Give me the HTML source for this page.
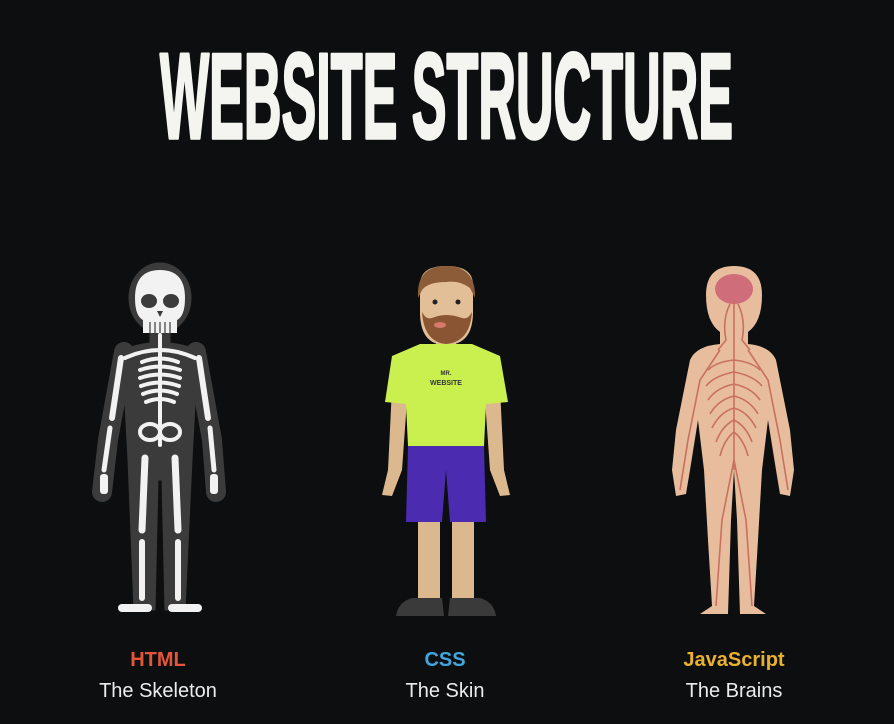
<!DOCTYPE html>
<html><head><meta charset="utf-8"><style>
html,body{margin:0;padding:0;background:#0c0e0f;width:894px;height:724px;overflow:hidden}
svg{display:block}
</style></head><body>
<svg width="894" height="724" viewBox="0 0 894 724" xmlns="http://www.w3.org/2000/svg">
<rect width="894" height="724" fill="#0c0e0f"/>
<text x="160" y="138" textLength="573" lengthAdjust="spacingAndGlyphs" font-family="Liberation Sans, sans-serif" font-weight="bold" font-size="122" fill="#f4f4f0" stroke="#f4f4f0" stroke-width="3.5" stroke-linejoin="round">WEBSITE STRUCTURE</text>

<!-- Skeleton -->
<g>
<g fill="#3b3b3b" stroke="#3b3b3b" stroke-linecap="round" stroke-linejoin="round">
<ellipse cx="160" cy="298" rx="31" ry="35"/>
<rect x="150" y="325" width="20" height="25"/>
<path d="M122 350 Q160 335 198 350 L192 460 L185 610 L165 610 L162 480 L158 480 L155 610 L134 610 L128 460 Z"/>
<path d="M124 352 L108 440 L102 492" stroke-width="20" fill="none"/>
<path d="M196 352 L212 440 L216 492" stroke-width="20" fill="none"/>
</g>
<g fill="#f2f2f2">
<path d="M135 298 Q135 270 160 270 Q185 270 185 298 Q185 316 177 320 L177 333 L143 333 L143 320 Q135 316 135 298Z"/>
</g>
<ellipse cx="149" cy="301" rx="8" ry="7" fill="#3b3b3b"/>
<ellipse cx="171" cy="301" rx="8" ry="7" fill="#3b3b3b"/>
<path d="M157 311 L163 311 L160 317Z" fill="#3b3b3b"/>
<g stroke="#3b3b3b" stroke-width="1.2"><line x1="150" y1="322" x2="150" y2="333"/><line x1="155" y1="322" x2="155" y2="333"/><line x1="160" y1="322" x2="160" y2="333"/><line x1="165" y1="322" x2="165" y2="333"/><line x1="170" y1="322" x2="170" y2="333"/></g>
<g stroke="#f2f2f2" fill="none" stroke-linecap="round" stroke-width="4">
<path d="M160 335 L160 445"/>
<path d="M125 358 Q160 342 195 358"/>
<path d="M142 362 Q160 355 178 362"/>
<path d="M140 370 Q160 363 180 370"/>
<path d="M140 378 Q160 371 180 378"/>
<path d="M141 386 Q160 379 179 386"/>
<path d="M143 394 Q160 387 177 394"/>
<path d="M146 402 Q160 396 174 402"/>
<path d="M121 358 L112 418" stroke-width="6"/>
<path d="M199 358 L208 418" stroke-width="6"/>
<path d="M110 428 L104 470" stroke-width="5"/>
<path d="M210 428 L214 470" stroke-width="5"/>
<path d="M145 458 L142 530" stroke-width="7"/>
<path d="M175 458 L178 530" stroke-width="7"/>
<path d="M142 542 L142 598" stroke-width="6"/>
<path d="M178 542 L178 598" stroke-width="6"/>
</g>
<ellipse cx="150" cy="432" rx="10" ry="8" fill="none" stroke="#f2f2f2" stroke-width="4"/>
<ellipse cx="170" cy="432" rx="10" ry="8" fill="none" stroke="#f2f2f2" stroke-width="4"/>
<g fill="#f2f2f2">
<rect x="100" y="474" width="8" height="20" rx="3"/>
<rect x="210" y="474" width="8" height="20" rx="3"/>
<rect x="118" y="604" width="34" height="8" rx="4"/>
<rect x="168" y="604" width="34" height="8" rx="4"/>
</g>
</g>

<!-- Mr Website -->
<g>
<rect x="436" y="325" width="20" height="22" fill="#d9b48a"/>
<path d="M420 285 Q420 266 446 266 Q473 266 473 285 L473 312 Q473 345 446 345 Q420 345 420 312Z" fill="#e2bf96"/>
<path d="M418 298 Q416 266 446 266 Q476 266 475 298 L470 288 Q460 280 446 282 Q428 282 422 290Z" fill="#8c5c38"/>
<path d="M422 312 Q424 342 446 344 Q470 342 472 312 Q468 320 462 318 Q446 312 432 318 Q426 320 422 312Z" fill="#8a5532"/>
<ellipse cx="440" cy="325" rx="6" ry="3" fill="#d77a6a"/>
<circle cx="435" cy="302" r="2.5" fill="#222"/><circle cx="458" cy="302" r="2.5" fill="#222"/>
<path d="M392 388 L388 470 L382 495 L392 496 L402 470 L407 400Z" fill="#dcb88e"/>
<path d="M500 388 L504 470 L510 495 L500 496 L490 470 L485 400Z" fill="#dcb88e"/>
<path d="M420 344 L472 344 L500 356 L508 402 L486 404 L484 446 L408 446 L406 404 L385 402 L392 356Z" fill="#c9f04e"/>
<text x="446" y="375" text-anchor="middle" font-family="Liberation Sans, sans-serif" font-weight="bold" font-size="6" fill="#333">MR.</text>
<text x="446" y="385" text-anchor="middle" font-family="Liberation Sans, sans-serif" font-weight="bold" font-size="7" fill="#333">WEBSITE</text>
<rect x="418" y="520" width="22" height="80" fill="#dcb88e"/>
<rect x="452" y="520" width="22" height="80" fill="#dcb88e"/>
<path d="M408 446 L484 446 L486 522 L450 522 L446 470 L442 522 L406 522Z" fill="#4b2bb0"/>
<path d="M412 598 L442 598 L444 616 L396 616 Q398 602 412 598Z" fill="#3a3a3a"/>
<path d="M450 598 L480 598 Q494 602 496 616 L448 616Z" fill="#3a3a3a"/>
</g>

<!-- Nervous system -->
<g>
<path d="M706 295 Q706 266 734 266 Q762 266 762 295 Q762 322 748 332 L748 344 Q770 346 776 360 L790 430 L794 470 L790 496 L780 494 L776 470 L768 420 L762 470 L758 540 L754 606 L766 614 L740 614 L737 520 L734 470 L731 520 L728 614 L700 614 L712 606 L708 540 L704 470 L698 420 L690 470 L686 494 L676 496 L672 470 L676 430 L690 360 Q696 346 720 344 L720 332 Q706 322 706 295Z" fill="#e7bd9e"/>
<ellipse cx="734" cy="289" rx="19" ry="15" fill="#cf6d7a"/>
<g stroke="#c9705f" stroke-width="1.6" fill="none">
<path d="M734 300 L734 470"/>
<path d="M730 304 Q722 320 726 340 L718 350"/>
<path d="M738 304 Q746 320 742 340 L750 350"/>
<path d="M734 460 L722 520 L716 606"/><path d="M734 460 L746 520 L752 606"/>
<path d="M720 350 L700 380 L688 440 L680 490"/><path d="M748 350 L768 380 L780 440 L788 490"/>
<path d="M734 360 Q716 362 708 370"/><path d="M734 360 Q752 362 760 370"/>
<path d="M734 372 Q714 376 706 386"/><path d="M734 372 Q754 376 762 386"/>
<path d="M734 384 Q716 388 708 400"/><path d="M734 384 Q752 388 760 400"/>
<path d="M734 396 Q718 400 710 414"/><path d="M734 396 Q750 400 758 414"/>
<path d="M734 408 Q720 412 712 428"/><path d="M734 408 Q748 412 756 428"/>
<path d="M734 420 Q722 426 716 442"/><path d="M734 420 Q746 426 752 442"/>
<path d="M734 432 Q724 440 720 456"/><path d="M734 432 Q744 440 748 456"/>
</g>
</g>

<g font-family="Liberation Sans, sans-serif" text-anchor="middle">
<text x="158" y="666" font-size="20" font-weight="bold" fill="#e4553a">HTML</text>
<text x="158" y="697" font-size="20" fill="#ececec">The Skeleton</text>
<text x="445" y="666" font-size="20" font-weight="bold" fill="#41a6dc">CSS</text>
<text x="445" y="697" font-size="20" fill="#ececec">The Skin</text>
<text x="734" y="666" font-size="20" font-weight="bold" fill="#e9b12e">JavaScript</text>
<text x="734" y="697" font-size="20" fill="#ececec">The Brains</text>
</g>
</svg>
</body></html>
